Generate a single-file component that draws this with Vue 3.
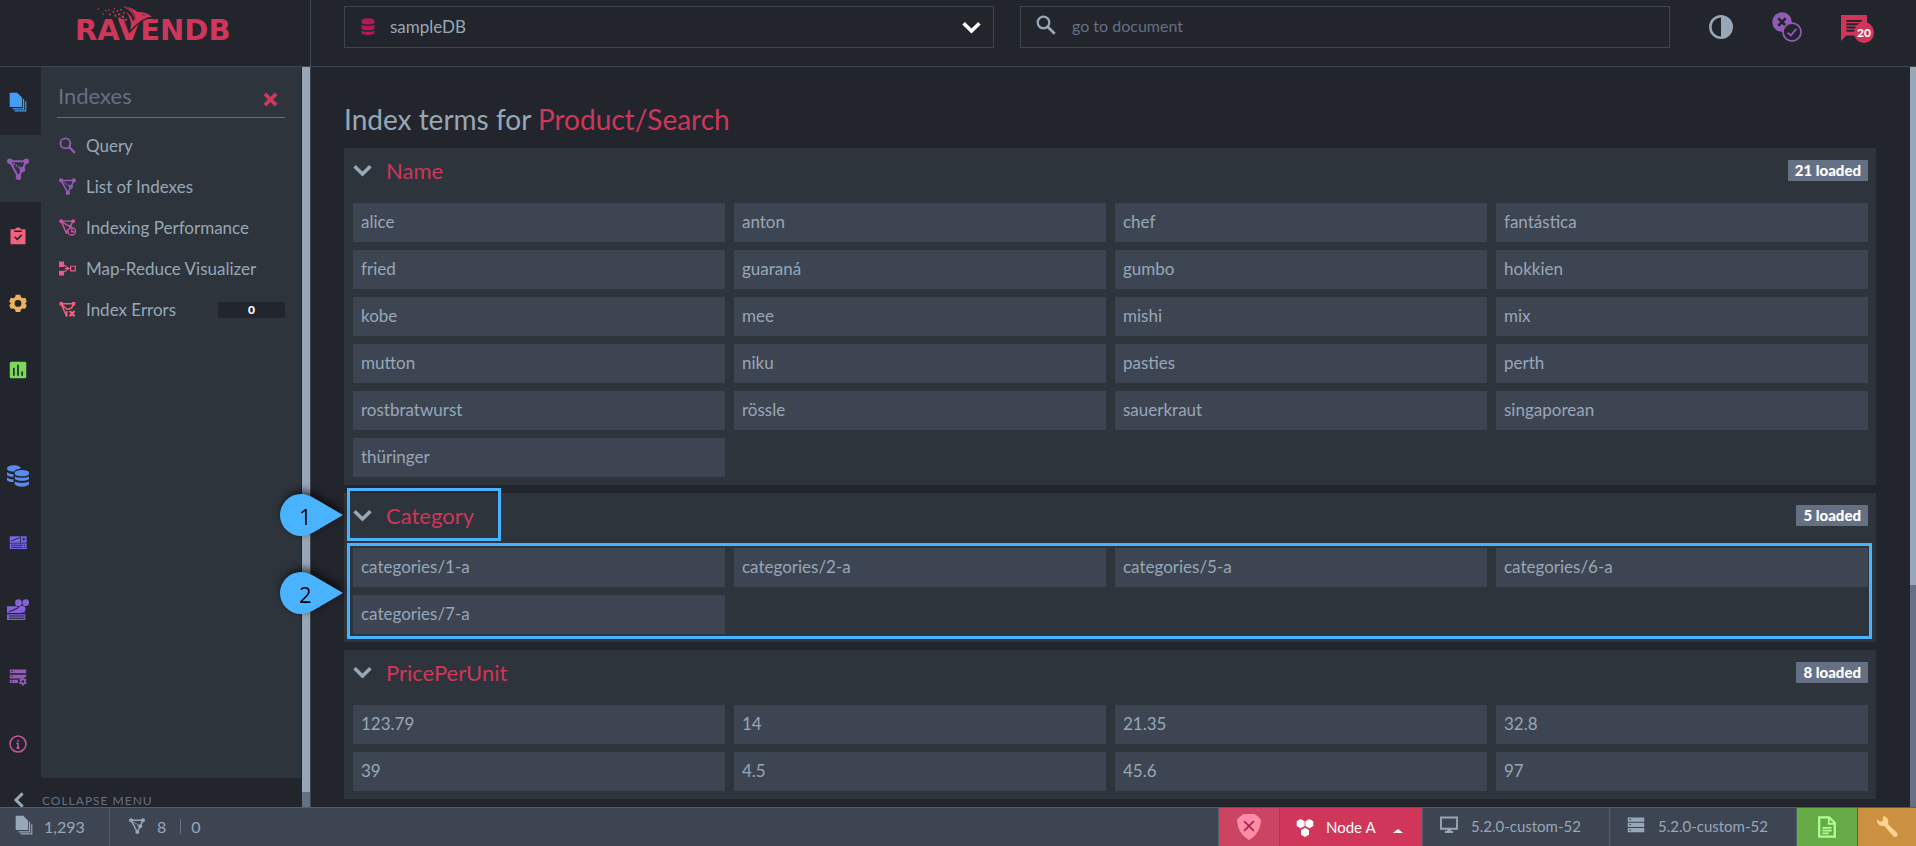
<script setup>
import { h, ref } from 'vue'

const shapes = {
  documents:
    '<path fill="currentColor" d="M2 1h9l6 6v11H2z"/><path fill="none" stroke="currentColor" stroke-width="1.400" d="M18.700 8.500V20.200H5.500M21.300 11V22.600H8"/>',
  index:
    '<g fill="currentColor"><circle cx="3" cy="3.500" r="3"/><circle cx="21" cy="3.500" r="3"/><circle cx="12.500" cy="21" r="3"/><circle cx="16.800" cy="12.500" r="3"/></g><g fill="none" stroke="currentColor" stroke-width="2.200"><path d="M3 3.500h18l-4.200 9L12.500 21z"/><path stroke-dasharray="1.800 1.500" d="M4 4.500l12 7.500"/></g>',
  performance:
    '<g fill="currentColor"><circle cx="3" cy="3" r="2.800"/><circle cx="20" cy="3" r="2.800"/><circle cx="16" cy="10" r="2"/></g><g fill="none" stroke="currentColor" stroke-width="2"><path d="M11 21L3 3h17l-5 9M4 4l12 7M11 20l1-5"/><circle cx="18" cy="17.500" r="5.200"/><path d="M18 14v4h3.500"/></g>',
  mapreduce:
    '<path fill="currentColor" d="M0 2h7v8H0zM0 15h7v7H0z"/><path fill="none" stroke="currentColor" stroke-width="1.700" d="M7 7l7 5-7 5M8 12h8M16.500 8.800h6.500v6.500h-6.500z"/>',
  errors:
    '<g fill="currentColor"><circle cx="3" cy="4" r="2.800"/><circle cx="20.500" cy="4" r="2.800"/></g><g fill="none" stroke="currentColor" stroke-width="2.100"><path d="M3 4h18l-3.500 6-6 2L4 5M3.500 5L11 22v-8"/><path stroke-width="3" d="M15 14l7 7.500M22 14l-7 7.500"/></g>',
  search:
    '<g fill="none" stroke="currentColor" stroke-width="2.700"><circle cx="9" cy="9" r="7"/><path stroke-width="3.300" d="M14 14l8.500 8.500"/></g>',
  tasks:
    '<path fill="currentColor" d="M2 3h6c1-3 7-3 8 0h6v20H2z"/><path fill="none" stroke="#22252c" stroke-width="2" d="M7 5.500h10M7.500 13l3.500 3.500 6-6"/>',
  gear:
    '<path fill="currentColor" fill-rule="evenodd" d="M9 1h6l1 3.200 2.400 1.400 3.300-.7 2 5-2.200 2.600 2.200 2.600-2 4.600-3.700-.4L15.800 21 15 24H9l-.800-3L6 19.300l-3.700.4-2-4.600 2.200-2.600-2.200-2.600 2-5 3.300.7L8 4.200zM12 8a4.500 4.500 0 1 0 0 9 4.500 4.500 0 0 0 0-9z"/>',
  chart:
    '<rect x="1" y="1" width="22" height="22" rx="2" fill="currentColor"/><path stroke="#22252c" stroke-width="2.200" d="M6.500 9v10.500M12 5v14.500M17.500 14v5.500"/>',
  database:
    '<path fill="currentColor" d="M3 4c0-5 18-5 18 0v3c-2 3-16 3-18 0zM3 9.500c3 2.500 15 2.500 18 0V15c-2 3-16 3-18 0zM3 17.500c3 2.500 15 2.500 18 0V21c-2 4-16 4-18 0z"/>',
  databases:
    '<g fill="currentColor"><path d="M0 4c0-5 15-5 15 0-4 0-6 1-7 3-4 .5-8-1-8-3zM0 8c2 1.500 4 2 7 2v3c-3 0-6-.5-7-2zM0 13.500c2 1.500 4 2 7 2v3c-3 0-6-.5-7-2z"/><path d="M8.500 8.500c0-4 15.500-4 15.500 0v1.500c-2 3-13.500 3-15.500 0zM8.500 12.500c3 2 12.500 2 15.500 0V15c-2 3-13.500 3-15.500 0zM8.500 18c3 2 12.500 2 15.500 0v3c-2 3.500-13.500 3.500-15.500 0z"/></g>',
  dashboard:
    '<path fill="currentColor" d="M1 3h14v8.500H1zM16 3h7.500v8.500H16zM1 12.500h22.500V20H1z"/><path fill="none" stroke="#22252c" stroke-width="1.200" d="M3 9l5-1.500 2-1 4-1.500M18 7h3.500M19.700 5v4M3 15h15M3 17.800h15M19.500 15h2M19.500 17.800h2"/>',
  cluster:
    '<path fill="currentColor" d="M0 8h11l4 4 1 3h4v8H0z"/><path fill="none" stroke="#22252c" stroke-width="1.200" d="M2 14l4-1.500 6-3M0 16h20M2 18.500h17M2 21h17"/><g fill="currentColor"><circle cx="12.500" cy="4" r="3.700"/><circle cx="20.500" cy="4" r="3.700"/><circle cx="16.500" cy="11" r="3.700"/></g>',
  servers:
    '<path fill="currentColor" d="M1 2h22v5H1zM1 9h22v3l-6 2H1zM1 15.500h11V20H1z"/><path stroke="#22252c" stroke-width="1.300" d="M3 4.500h2M3 11h2M3 17.700h2"/><circle cx="18.500" cy="18" r="3" fill="none" stroke="currentColor" stroke-width="2.400"/><path stroke="currentColor" stroke-width="2" d="M18.500 12.500v2M18.500 21.500v2M13.800 15.200l1.700 1M21.500 19.800l1.700 1M13.800 20.800l1.700-1M21.500 16.200l1.700-1"/>',
  info:
    '<circle cx="12" cy="12" r="10.600" fill="none" stroke="currentColor" stroke-width="2"/><path stroke="currentColor" stroke-width="2.200" d="M12 6.500v2.200M12 10.500v7M10 11h2M10 17.500h4"/>',
  chevron: '<path fill="none" stroke="currentColor" stroke-width="4.500" d="M2 6.500l10 10 10-10"/>',
  close: '<path fill="none" stroke="currentColor" stroke-width="6" d="M3 3l18 18M21 3L3 21"/>',
  contrast:
    '<circle cx="12" cy="12" r="10.700" fill="none" stroke="currentColor" stroke-width="2.600"/><path fill="currentColor" d="M12 1a11 11 0 0 1 0 22z"/>',
  status:
    '<circle cx="8" cy="8" r="7.800" fill="currentColor"/><path stroke="#22252c" stroke-width="2" d="M5 5l6 6M11 5l-6 6"/><circle cx="16" cy="16" r="7.200" fill="#22252c" stroke="currentColor" stroke-width="1.400"/><path fill="none" stroke="currentColor" stroke-width="1.500" d="M12.500 16.500l2.500 2.300 4.500-5.300"/>',
  message:
    '<path fill="currentColor" d="M0 0h24v19H5l-5 5z"/><path stroke="#22252c" stroke-width="1.700" d="M5 5.500h14M5 8.500h14M5 11.500h14M5 14.500h9"/>',
  shield:
    '<path fill="currentColor" d="M4 2l3-2h10l3 2 3 3c0 8-4 15-11 19C5 20 1 13 1 5z"/><path stroke="#a92748" stroke-width="1.600" d="M7.500 6.500l9 9M16.500 6.500l-9 9"/>',
  node:
    '<g fill="currentColor"><path d="M6.200 0l5.300 2.900v6.400L6.200 12.200.9 9.300V2.900zM17.800 0l5.300 2.900v6.400l-5.300 2.900-5.300-2.900V2.900zM12 11.600l5.300 2.900v6.600L12 24l-5.300-2.900v-6.600z"/></g>',
  monitor:
    '<path fill="none" stroke="currentColor" stroke-width="2.500" d="M1.300 2h21.400v15H1.300z"/><path fill="currentColor" d="M9.500 17h5v3h3v2.500h-11V20h3z"/>',
  server:
    '<path fill="currentColor" d="M1 2h22v5.500H1zM1 9h22v5.500H1zM1 16h22v5.500H1z"/><path stroke="#3d4553" stroke-width="1.500" d="M3 4.700h2.500M3 11.700h2.500M3 18.700h2.500"/>',
  note:
    '<path fill="none" stroke="currentColor" stroke-width="2.400" d="M3.500 1.500h11l6 6v15h-17z"/><path fill="none" stroke="currentColor" stroke-width="2" d="M14 2v6.500h6M7 13h10M7 16h10M7 19h7"/>',
  wrench:
    '<path fill="currentColor" d="M7 0l-.3 5L4 6.500 0 4c-.7 5 3 8.300 8.300 7.300L19 23.500c3 1.500 5.500-1.500 4-4L12.500 9C14 4.500 12 1 7 0z"/>',
}

const Icon = (props) =>
  h('svg', { viewBox: '0 0 24 24', 'aria-hidden': 'true', innerHTML: shapes[props.name] })
Icon.props = ['name']

const railTop = [
  { icon: 'documents', label: 'Documents', tone: 'blue', large: true },
  { icon: 'index', label: 'Indexes', tone: 'purple', active: true, large: true },
  { icon: 'tasks', label: 'Tasks', tone: 'coral' },
  { icon: 'gear', label: 'Settings', tone: 'amber' },
  { icon: 'chart', label: 'Stats', tone: 'green' },
]
const railBottom = [
  { icon: 'databases', label: 'Databases', tone: 'azure', large: true },
  { icon: 'dashboard', label: 'Server Dashboard', tone: 'indigo' },
  { icon: 'cluster', label: 'Cluster Dashboard', tone: 'violet', large: true },
  { icon: 'servers', label: 'Manage Server', tone: 'purple' },
  { icon: 'info', label: 'About', tone: 'magenta' },
]
const menu = [
  { icon: 'search', label: 'Query', tone: 'purple' },
  { icon: 'index', label: 'List of Indexes', tone: 'purple' },
  { icon: 'performance', label: 'Indexing Performance', tone: 'magenta' },
  { icon: 'mapreduce', label: 'Map-Reduce Visualizer', tone: 'pink' },
  { icon: 'errors', label: 'Index Errors', tone: 'coral', count: 0 },
]
const fields = ref([
  {
    name: 'Name',
    loaded: 21,
    terms: [
      'alice', 'anton', 'chef', 'fantástica',
      'fried', 'guaraná', 'gumbo', 'hokkien',
      'kobe', 'mee', 'mishi', 'mix',
      'mutton', 'niku', 'pasties', 'perth',
      'rostbratwurst', 'rössle', 'sauerkraut', 'singaporean',
      'thüringer',
    ],
  },
  {
    name: 'Category',
    loaded: 5,
    marked: true,
    terms: ['categories/1-a', 'categories/2-a', 'categories/5-a', 'categories/6-a', 'categories/7-a'],
  },
  {
    name: 'PricePerUnit',
    loaded: 8,
    terms: ['123.79', '14', '21.35', '32.8', '39', '4.5', '45.6', '97'],
  },
])
const specks = [
  [290, 25, 4], [305, 40, 4], [312, 30, 4], [324, 41, 5], [322, 28, 4], [335, 33, 5],
  [347, 30, 5], [340, 44, 6], [352, 40, 6], [352, 52, 7], [362, 47, 7], [364, 59, 6],
  [372, 56, 6], [366, 35, 6], [338, 24, 4], [358, 27, 5],
]
</script>

<template>
  <div class="studio">
    <header class="topbar">
      <a class="brand" href="#" aria-label="RavenDB">
        <svg class="logo" viewBox="222 0 480 150">
          <text class="logo-text" x="222" y="120">RAVENDB</text>
          <g fill="#cf3659">
            <rect v-for="(s, i) in specks" :key="i" :x="s[0]" :y="s[1]" :width="s[2]" :height="s[2]" />
            <path
              stroke="#22252c"
              stroke-width="4"
              d="M386 93C391 72 388 50 368 32 384 35 393 49 398 62 398 44 388 28 350 18 383 15 397 24 410 34 432 33 448 39 459 56 446 51 438 54 433 58 415 63 405 77 388 94z"
            />
          </g>
          <path fill="none" stroke="#22252c" stroke-width="2" d="M373 21c20 6 28 20 30 36M424 43l8 2" />
        </svg>
      </a>
      <div class="tools">
        <div class="field">
          <Icon name="database" class="field-icon db" />
          <select class="control" aria-label="Database">
            <option>sampleDB</option>
          </select>
          <Icon name="chevron" class="caret" />
        </div>
        <div class="field">
          <Icon name="search" class="field-icon find" />
          <input class="control" type="text" placeholder="go to document" aria-label="Go to document" />
        </div>
        <div class="actions">
          <button type="button" aria-label="Theme"><Icon name="contrast" class="i-contrast" /></button>
          <button type="button" aria-label="Status"><Icon name="status" class="i-status purple" /></button>
          <button type="button" aria-label="Notifications" class="notify">
            <Icon name="message" class="i-message" />
            <span class="bubble">20</span>
          </button>
        </div>
      </div>
    </header>

    <div class="body">
      <aside class="sidebar">
        <nav class="rail" aria-label="Main">
          <a
            v-for="item in railTop"
            :key="item.label"
            href="#"
            :aria-label="item.label"
            :class="[item.tone, { active: item.active, large: item.large }]"
          ><Icon :name="item.icon" /></a>
          <div class="rail-gap"></div>
          <a
            v-for="item in railBottom"
            :key="item.label"
            href="#"
            :aria-label="item.label"
            :class="[item.tone, { large: item.large }]"
          ><Icon :name="item.icon" /></a>
        </nav>
        <section class="panel">
          <div class="panel-head">
            <h2>Indexes</h2>
            <button type="button" aria-label="Close"><Icon name="close" /></button>
          </div>
          <nav class="menu" aria-label="Indexes">
            <a v-for="item in menu" :key="item.label" href="#">
              <Icon :name="item.icon" :class="item.tone" />
              <span>{{ item.label }}</span>
              <b v-if="item.count !== undefined">{{ item.count }}</b>
            </a>
          </nav>
        </section>
        <button class="collapse" type="button">
          <Icon name="chevron" />
          <span>COLLAPSE MENU</span>
        </button>
      </aside>
      <div class="scroll side-scroll"><div class="thumb"></div></div>

      <main class="content">
        <h1>Index terms for <span>Product/Search</span></h1>
        <section v-for="field in fields" :key="field.name" class="card">
          <div class="card-head">
            <button type="button"><Icon name="chevron" /><span>{{ field.name }}</span></button>
            <span class="loaded">{{ field.loaded }} loaded</span>
          </div>
          <ul class="terms">
            <li v-for="term in field.terms" :key="term">{{ term }}</li>
          </ul>
          <template v-if="field.marked">
            <div class="frame frame-head"></div>
            <div class="frame frame-terms"></div>
            <div v-for="n in 2" :key="n" class="pin" :class="'pin-' + n">
              <svg viewBox="0 0 64 42" aria-hidden="true">
                <path fill="#49b3ff" d="M21 0C26 0 30 2 34 4L63 21 34 38C30 40 26 42 21 42A21 21 0 0 1 21 0z" />
              </svg>
              <span>{{ n }}</span>
            </div>
          </template>
        </section>
      </main>
      <div class="scroll main-scroll"><div class="thumb"></div></div>
    </div>

    <footer class="statusbar">
      <a href="#" class="cell docs"><Icon name="documents" /><span>1,293</span></a>
      <a href="#" class="cell indexes"><Icon name="index" /><span>8</span><i></i><span>0</span></a>
      <a href="#" class="cell shield" aria-label="Security"><Icon name="shield" /></a>
      <button type="button" class="cell node"><Icon name="node" /><span>Node A</span><i class="up"></i></button>
      <a href="#" class="cell version"><Icon name="monitor" /><span>5.2.0-custom-52</span></a>
      <a href="#" class="cell version"><Icon name="server" /><span>5.2.0-custom-52</span></a>
      <a href="#" class="cell note" aria-label="License"><Icon name="note" /></a>
      <a href="#" class="cell wrench" aria-label="Support"><Icon name="wrench" /></a>
    </footer>
  </div>
</template>

<style>
body {
  margin: 0;
  background: #22252c;
}
</style>

<style scoped>
.studio {
  display: flex;
  flex-direction: column;
  height: 100vh;
  overflow: hidden;
  background: #22252c;
  color: #98a7b7;
  font: 17px/23px Lato, "Open Sans", sans-serif;
}
.studio * {
  box-sizing: border-box;
}
a {
  color: inherit;
  text-decoration: none;
}
button {
  padding: 0;
  border: 0;
  background: none;
  color: inherit;
  font: inherit;
  cursor: pointer;
}
svg {
  display: block;
  flex: none;
}

.blue { color: #459cf3; }
.purple { color: #945ab8; }
.coral { color: #f0627d; }
.amber { color: #efb15a; }
.green { color: #7bd95a; }
.azure { color: #5c8bf0; }
.indigo { color: #7566e8; }
.violet { color: #8562dc; }
.magenta { color: #c8559f; }
.pink { color: #ea5a8c; }

.topbar {
  display: flex;
  flex: none;
  height: 67px;
  border-bottom: 1px solid #3d4553;
}
.brand {
  display: flex;
  flex: none;
  justify-content: center;
  width: 311px;
  border-right: 1px solid #3d4553;
}
.logo {
  width: 160px;
  height: 50px;
  overflow: visible;
}
.logo-text {
  font: bold 87px "DejaVu Sans", sans-serif;
  fill: #cf3659;
}
.tools {
  display: flex;
  flex: 1;
  gap: 26px;
  padding: 6px 30px 0 33px;
}
.field {
  position: relative;
  flex: 1;
  height: 42px;
}
.control {
  display: block;
  width: 100%;
  height: 42px;
  padding: 0 50px 2px 45px;
  border: 1px solid #3d4553;
  border-radius: 0;
  outline: 0;
  background: none;
  color: #98a7b7;
  font: inherit;
  appearance: none;
}
input.control {
  padding-bottom: 4px;
  padding-left: 51px;
  font-size: 16px;
}
.control::placeholder {
  color: #667085;
  opacity: 1;
}
.field-icon {
  position: absolute;
  pointer-events: none;
}
.db {
  top: 12px;
  left: 15px;
  width: 18px;
  height: 17px;
  color: #af1a57;
}
.find {
  top: 9px;
  left: 16px;
  width: 20px;
  height: 20px;
}
.caret {
  position: absolute;
  top: 12px;
  right: 13px;
  width: 19px;
  height: 19px;
  color: #fff;
  pointer-events: none;
}
.actions {
  display: flex;
  flex: none;
  gap: 39px;
  align-items: flex-start;
  width: 190px;
  padding: 6px 0 0 13px;
}
.i-contrast {
  width: 24px;
  height: 24px;
  margin-top: 3px;
}
.i-status {
  width: 30px;
  height: 30px;
}
.notify {
  position: relative;
}
.i-message {
  width: 26px;
  height: 26px;
  margin-top: 3px;
  color: #cf3659;
}
.bubble {
  position: absolute;
  top: 10px;
  left: 13px;
  width: 20px;
  height: 21px;
  border-radius: 50%;
  background: #cf3659;
  color: #fff;
  font-size: 12px;
  font-weight: 900;
  line-height: 21px;
}

.body {
  display: flex;
  flex: 1;
  min-height: 0;
}
.sidebar {
  display: grid;
  flex: none;
  grid-template: minmax(0, 1fr) 29px / 41px 260px;
  overflow: hidden;
}
.rail {
  padding-top: 1px;
}
.rail a {
  display: flex;
  align-items: center;
  justify-content: center;
  height: 67px;
  padding-right: 5px;
}
.rail a.active {
  background: #2d343b;
}
.rail svg {
  width: 18px;
  height: 18px;
}
.rail .large svg {
  width: 22px;
  height: 22px;
}
.rail .blue svg {
  width: 20px;
  height: 20px;
}
.rail-gap {
  height: 39px;
}
.panel {
  padding: 11px 16px 0;
  background: #2d343b;
}
.panel-head {
  display: flex;
  align-items: center;
  justify-content: space-between;
  height: 40px;
  padding: 0 7px 0 1px;
  border-bottom: 1px solid #667085;
}
.panel-head h2 {
  margin: 0 0 4px;
  color: #667085;
  font-size: 22px;
  font-weight: 400;
  line-height: 26px;
}
.panel-head button {
  margin-top: 4px;
  color: #cf3659;
}
.panel-head svg {
  width: 15px;
  height: 15px;
}
.menu {
  padding-top: 7px;
}
.menu a {
  display: flex;
  align-items: center;
  height: 41px;
  padding-left: 2px;
}
.menu svg {
  width: 17px;
  height: 17px;
  margin-right: 10px;
}
.menu b {
  width: 67px;
  height: 16px;
  margin-left: auto;
  border-radius: 2px;
  background: #22252c;
  color: #fff;
  font-size: 12px;
  font-weight: 900;
  line-height: 16px;
  text-align: center;
}
.collapse {
  display: flex;
  grid-column: 1 / 3;
  align-items: center;
  height: 44px;
  padding-left: 11px;
}
.collapse svg {
  width: 16px;
  height: 16px;
  margin-right: 15px;
  transform: rotate(90deg);
}
.collapse span {
  color: #667085;
  font-size: 12px;
  letter-spacing: 1px;
}
.scroll {
  flex: none;
  background: #667085;
}
.thumb {
  background: #98a7b7;
}
.side-scroll {
  width: 10px;
  border-right: 1px solid #3d4553;
  border-left: 1px solid #22252c;
}
.side-scroll .thumb {
  height: 98%;
}
.main-scroll {
  width: 6px;
}
.main-scroll .thumb {
  height: 70%;
}

.content {
  flex: 1;
  min-width: 0;
  padding: 32px 34px 0 33px;
}
h1 {
  margin: 0 0 9px;
  font-size: 28px;
  font-weight: 400;
  line-height: 40px;
}
h1 span {
  color: #cf3659;
}
.card {
  position: relative;
  margin-bottom: 8px;
  background: #2d343b;
}
.card-head {
  display: flex;
  align-items: center;
  justify-content: space-between;
  height: 55px;
  padding: 0 8px 11px 9px;
}
.card-head button {
  display: flex;
  align-items: center;
}
.card-head button span {
  color: #cf3659;
  font-size: 22px;
}
.card-head svg {
  width: 19px;
  height: 19px;
  margin-right: 14px;
}
.loaded {
  padding: 0 7px;
  border-radius: 1px;
  background: #667085;
  color: #fff;
  font-size: 15px;
  font-weight: 900;
  line-height: 21px;
}
.terms {
  display: grid;
  grid-template-columns: repeat(4, minmax(0, 1fr));
  gap: 8px 9px;
  margin: 0;
  padding: 0 8px 8px 9px;
  list-style: none;
}
.terms li {
  padding: 7px 8px 9px;
  background: #3d4553;
}
.frame {
  position: absolute;
  border: 3px solid #49b3ff;
  pointer-events: none;
}
.frame-head {
  top: -5px;
  left: 3px;
  width: 154px;
  height: 53px;
}
.frame-terms {
  top: 50px;
  right: 4px;
  bottom: 3px;
  left: 3px;
}
.pin {
  position: absolute;
  left: -64px;
  width: 64px;
  height: 42px;
  color: #000;
  font: 22px/42px "Open Sans", sans-serif;
  filter: drop-shadow(2px -3px 4px rgba(0, 0, 0, 0.7));
}
.pin svg {
  width: 64px;
  height: 42px;
}
.pin span {
  position: absolute;
  top: 1px;
  left: 19px;
}
.pin-1 {
  top: 1px;
}
.pin-2 {
  top: 79px;
}

.statusbar {
  position: relative;
  display: flex;
  flex: none;
  height: 39px;
  border-top: 1px solid #545d6c;
  background: #3d4553;
  font-size: 16px;
}
.cell {
  display: flex;
  align-items: center;
  height: 38px;
  padding-bottom: 1px;
  border-right: 1px solid #545d6c;
}
.docs {
  width: 110px;
  padding-left: 14px;
}
.docs svg {
  width: 20px;
  height: 20px;
  margin-right: 10px;
  margin-bottom: 3px;
}
.indexes {
  flex: 1;
  padding-left: 19px;
}
.indexes svg {
  width: 16px;
  height: 16px;
  margin-right: 12px;
  margin-bottom: 2px;
}
.indexes i {
  width: 1px;
  height: 15px;
  margin: 0 10px 0 14px;
  background: #667085;
}
.shield {
  justify-content: center;
  width: 61px;
  background: #cb4562;
  color: #ff8ca9;
}
.shield svg {
  width: 26px;
  height: 26px;
}
.node {
  width: 143px;
  padding-top: 2px;
  padding-left: 15px;
  background: #cf3659;
  color: #fff;
  font-size: 15px;
}
.node svg {
  width: 20px;
  height: 18px;
  margin-right: 11px;
}
.up {
  margin: 6px 0 0 17px;
  border: 5px solid transparent;
  border-top: 0;
  border-bottom: 4px solid #fff;
}
.version {
  width: 187px;
  padding-left: 17px;
  font-size: 15px;
}
.version svg {
  width: 18px;
  height: 18px;
  margin-right: 13px;
  margin-bottom: 4px;
}
.note {
  justify-content: center;
  width: 61px;
  background: #67ab48;
  color: #b0ff94;
}
.note svg {
  width: 24px;
  height: 22px;
}
.wrench {
  justify-content: center;
  width: 58px;
  border-right: 0;
  background: #cc9140;
  color: #ffd291;
}
.wrench svg {
  width: 21px;
  height: 21px;
}
</style>
